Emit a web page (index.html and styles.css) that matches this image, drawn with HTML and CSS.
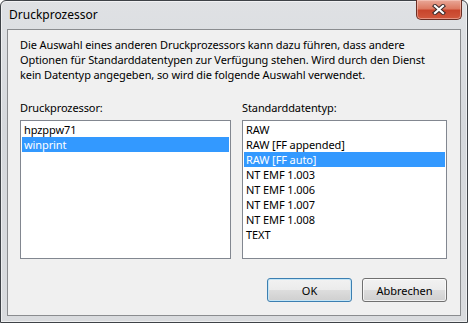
FILE: index.html
```html
<!DOCTYPE html>
<html lang="de">
<head>
  <meta charset="UTF-8" />
  <title>Druckprozessor</title>
  <link rel="stylesheet" href="styles.css">
</head>
<body>

  <!-- Fensterrahmen -->
  <div class="window">
    <div class="titlebar">
      <span class="title">Druckprozessor</span>
      <div class="close-btn">
        <svg width="14" height="11" viewBox="0 0 14 11">
          <path d="M3 2 L11 9 M11 2 L3 9" stroke="#3b2a2a" stroke-width="4.2" stroke-linecap="square" fill="none"/>
          <path d="M3 2 L11 9 M11 2 L3 9" stroke="#fff" stroke-width="2.2" stroke-linecap="square" fill="none"/>
        </svg>
      </div>
    </div>

    <!-- Inhalt -->
    <div class="client">
      <p class="desc">
        Die Auswahl eines anderen Druckprozessors kann dazu führen, dass andere<br>
        Optionen für Standarddatentypen zur Verfügung stehen. Wird durch den Dienst<br>
        kein Datentyp angegeben, so wird die folgende Auswahl verwendet.
      </p>

      <div class="lists">
        <div class="field">
          <label>Druckprozessor:</label>
          <ul class="listbox">
            <li>hpzppw71</li>
            <li class="selected">winprint</li>
          </ul>
        </div>
        <div class="field">
          <label>Standarddatentyp:</label>
          <ul class="listbox">
            <li>RAW</li>
            <li>RAW [FF appended]</li>
            <li class="selected">RAW [FF auto]</li>
            <li>NT EMF 1.003</li>
            <li>NT EMF 1.006</li>
            <li>NT EMF 1.007</li>
            <li>NT EMF 1.008</li>
            <li>TEXT</li>
          </ul>
        </div>
      </div>

      <div class="buttons">
        <button class="btn default">OK</button>
        <button class="btn">Abbrechen</button>
      </div>
    </div>
  </div>

</body>
</html>
```

FILE: styles.css
```css
/* リセット */
* {
  margin: 0;
  padding: 0;
  box-sizing: border-box;
}

body {
  font-family: "Noto Sans", "Open Sans", sans-serif;
  font-size: 11px;
  letter-spacing: -0.1px;
  color: #000;
  background-color: #fff;
}

/* Fenster */
.window {
  width: 468px;
  height: 323px;
  display: flex;
  flex-direction: column;
  border: 1px solid #3e4247;
  border-radius: 6px 6px 0 0;
  background: linear-gradient(to bottom, #dfe1e4 0%, #d5d8dc 40%, #d9dbde 100%);
  box-shadow: inset 0 0 0 1px rgba(255, 255, 255, 0.55);
}

.titlebar {
  height: 28px;
  display: flex;
  align-items: flex-start;
}

.title {
  padding: 6px 0 0 8px;
  font-size: 12px;
  letter-spacing: 0;
  line-height: 16px;
}

.close-btn {
  margin-left: auto;
  margin-right: 5px;
  margin-top: -1px;
  width: 46px;
  height: 20px;
  display: flex;
  align-items: center;
  justify-content: center;
  border: 1px solid #6b2e24;
  border-top: none;
  border-radius: 0 0 5px 5px;
  background: linear-gradient(to bottom, #e9a898 0%, #dd7a62 45%, #c8452c 55%, #d1583d 100%);
  box-shadow: inset 0 0 0 1px rgba(255, 220, 210, 0.45);
}

/* Clientbereich */
.client {
  flex: 1;
  margin: 0 6px 6px 6px;
  border: 1px solid #8a8c8f;
  background-color: #f0f0f0;
  padding: 7px 13px 13px 12px;
  display: flex;
  flex-direction: column;
}

.desc {
  line-height: 15px;
  white-space: nowrap;
  margin-bottom: 18px;
}

.lists {
  display: grid;
  grid-template-columns: 211px 205px;
  column-gap: 11px;
}

.field label {
  display: block;
  line-height: 15px;
  margin-bottom: 5px;
}

.listbox {
  list-style: none;
  height: 139px;
  border: 1px solid #828790;
  background-color: #fff;
  padding: 1px;
}

.listbox li {
  height: 15px;
  line-height: 15px;
  padding-left: 2px;
  white-space: nowrap;
}

.listbox li.selected {
  background-color: #3399ff;
  color: #fff;
}

/* Schaltflächen */
.buttons {
  margin-top: auto;
  display: flex;
  justify-content: flex-end;
  gap: 10px;
}

.btn {
  width: 85px;
  height: 24px;
  font-family: inherit;
  font-size: 11px;
  color: #000;
  border: 1px solid #707070;
  border-radius: 3px;
  background: linear-gradient(to bottom, #f2f2f2 0%, #ebebeb 50%, #dddddd 51%, #cfcfcf 100%);
  box-shadow: inset 0 0 0 1px rgba(255, 255, 255, 0.7);
}

.btn.default {
  border-color: #3c7fb1;
  box-shadow: inset 0 0 0 1px #c4e5f6;
}
```
